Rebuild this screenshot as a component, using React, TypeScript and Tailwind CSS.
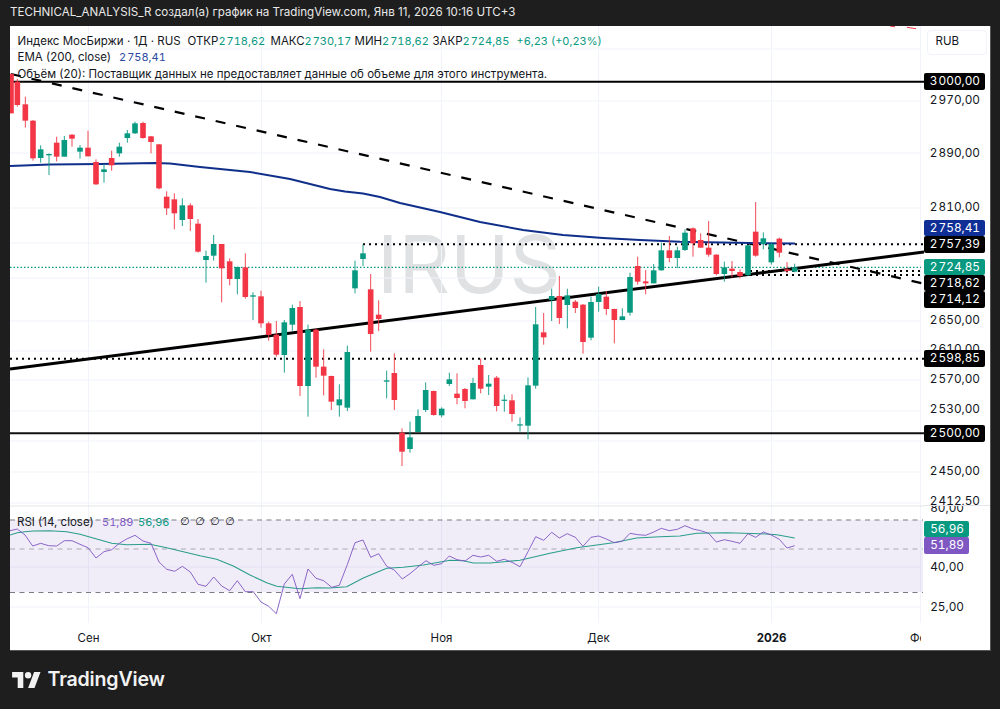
import React from "react";

const RED = "#f23645";
const GREEN = "#089981";

// [centre x, wick top, body top, body bottom, wick bottom, colour (1 = green, 0 = red)]
type C = [number, number, number, number, number, number];

const setA: C[] = [
  [33,220,222,340,340,0],[52,237,245,315,320,0],[76,290,313,362,383,0],[99,360,362,475,482,0],[122,436,448,474,488,1],
  [147,460,462,466,525,1],[170,410,428,470,484,0],[193,408,420,470,470,1],[216,403,404,416,440,0],[240,435,443,455,476,1],
  [264,392,443,469,469,0],[288,478,486,553,555,0],[312,492,508,516,548,1],[335,452,474,496,512,0],[358,428,440,460,470,1],
  [382,390,400,414,428,1],[405,365,370,400,402,1],[429,365,369,414,416,0],[453,408,409,426,460,0],[477,432,433,565,568,0],
  [500,574,590,625,645,0],[523,580,598,640,688,0],[547,595,616,660,678,1],[571,610,616,657,693,0],[594,657,671,755,758,0],
  [618,752,768,780,848,1],[641,705,732,767,782,1],[665,732,732,805,907,0],[689,775,784,837,856,0],[712,800,801,837,883,1],
  [736,760,802,891,896,0],[759,877,886,890,960,1],[783,872,889,970,983,0],[806,965,970,1005,1022,0],[829,963,1004,1064,1070,0],
  [853,960,967,1065,1118,1],[877,914,924,974,992,1],[900,903,921,1158,1188,0],[924,974,989,1158,1250,1],[948,986,989,1100,1133,0],
  [971,1048,1100,1127,1186,0],[994,1127,1128,1205,1230,0],[1018,1153,1198,1216,1250,1],
];
const setB: C[] = [
  [52,317,336,503,513,1],[75,62,91,145,160,1],[99,14,40,57,78,1],[122,102,148,282,335,0],[146,181,224,237,273,0],
  [170,392,421,425,475,1],[193,340,399,480,510,0],[216,565,578,635,678,0],[240,545,592,627,638,1],[264,508,528,576,576,1],
  [287,427,450,510,516,1],[311,452,453,525,527,0],[335,502,506,526,532,1],[358,398,418,432,438,1],[381,400,461,474,493,0],
  [405,444,447,483,505,0],[429,413,429,478,478,1],[452,356,375,446,460,0],[476,405,431,440,465,1],[500,408,413,498,514,0],
  [523,464,479,482,515,1],[546,463,481,522,545,0],[570,532,553,556,575,1],[594,412,436,557,598,1],[617,201,253,437,446,1],
  [641,219,277,292,314,0],[665,146,168,180,243,1],[688,108,168,234,252,0],[712,146,166,195,265,1],[736,180,185,204,219,0],
  [759,192,194,306,341,0],[783,170,186,293,301,1],[806,140,162,186,215,1],[829,153,170,207,225,0],[853,206,207,240,310,0],
  [877,205,229,240,241,1],[900,98,111,218,227,1],[923,50,78,125,134,0],[947,90,124,130,163,0],[971,72,91,130,130,1],[994,8,31,91,92,1],
];
const setC: C[] = [
  [28,138,181,204,217,0],[52,170,181,204,234,1],[75,118,128,180,183,1],[99,112,115,160,200,0],[122,130,150,173,173,0],
  [146,93,173,194,200,0],[169,193,194,252,256,0],[193,215,232,252,275,1],[216,213,236,243,262,0],[240,238,246,258,265,0],
  [264,165,166,255,258,1],[287,36,125,197,200,0],[310,127,145,162,178,1],[334,158,162,217,224,1],[358,143,146,188,202,0],
  [381,216,238,243,250,0],[404,221,232,245,247,1],
];

const toReal = (set: C[], ox: number, oy: number): C[] =>
  set.map(([x, a, b, c, d, g]) => [ox + x / 3, oy + a / 3, oy + b / 3, oy + c / 3, oy + d / 3, g]);
const candles: C[] = [...toReal(setA, 0, 0), ...toReal(setB, 330, 240), ...toReal(setC, 660, 190)];

const pts = (list: number[][], ox: number, oy: number) =>
  list.map(([x, y]) => `${(ox + x / 3).toFixed(1)},${(oy + y / 3).toFixed(1)}`).join(" ");

const rsi = [
  pts([[30,152],[52,147],[75,165],[98,198],[122,190],[146,197],[170,198],[193,182],[216,182],[240,193],[264,203],[288,234],[312,215],[335,209],[358,190],[382,176],[405,166],[429,183],[453,190],[477,246],[500,268],[524,274],[547,259],[571,276],[594,313],[618,319],[641,291],[665,318],[689,332],[712,302],[736,335],[760,335],[783,366],[806,379],[829,401],[853,312],[877,283],[900,356],[924,267],[948,295],[971,302],[995,322]], 0, 480),
  pts([[28,316],[52,254],[75,188],[99,180],[122,232],[146,221],[170,259],[193,270],[217,297],[240,281],[264,261],[288,242],[311,256],[335,251],[358,228],[381,239],[405,243],[429,226],[452,231],[476,226],[500,244],[523,238],[546,247],[570,260],[594,215],[617,170],[641,181],[665,157],[688,174],[712,161],[736,172],[759,199],[783,172],[806,168],[829,177],[853,188],[877,184],[900,160],[923,164],[947,166],[971,156],[994,145]], 330, 480),
  pts([[28,152],[52,148],[75,137],[99,147],[122,152],[146,160],[169,186],[193,179],[216,184],[240,190],[264,161],[287,172],[310,156],[334,165],[358,178],[381,204],[404,197]], 660, 480),
].join(" ");

const rsiMa = [
  pts([[30,165],[52,158],[75,155],[100,153],[150,152],[200,155],[240,163],[290,177],[335,190],[380,194],[450,193],[500,203],[600,227],[650,238],[700,258],[750,285],[800,308],[830,319],[900,326],[950,323]], 0, 480),
  pts([[0,324],[50,320],[100,294],[170,265],[220,262],[280,255],[360,241],[400,242],[430,249],[480,249],[570,241],[660,220],[740,203],[850,188],[920,174]], 330, 480),
  pts([[0,170],[60,168],[110,160],[200,158],[300,161],[350,164],[404,174]], 660, 480),
].join(" ");

const ema =
  "10,166 50,164.5 100,164 155,163 170,163.5 200,167 250,172 290,179 330,189 345,191.5 363,193.5 380,197 400,203 440,212 480,222 523,230 563,235 603,238 640,240 680,241.7 750,243 795,243.5";

const hGrid = [49, 101, 153, 208, 243, 278, 321, 351, 380, 411, 441, 472, 503];
const vGrid = [88.5, 261.5, 441.5, 598.5, 771.5];

const THIN = "\u200A";

type Tag = { y: number; text: string; bg?: string; color?: string; short?: boolean };
const priceTags: Tag[] = [
  { y: 100.5, text: `2${THIN}970,00` },
  { y: 153.5, text: `2${THIN}890,00` },
  { y: 207, text: `2${THIN}810,00` },
  { y: 320, text: `2${THIN}650,00` },
  { y: 349, text: `2${THIN}610,00` },
  { y: 379.5, text: `2${THIN}570,00` },
  { y: 409.5, text: `2${THIN}530,00` },
  { y: 471.5, text: `2${THIN}450,00` },
  { y: 501.5, text: `2${THIN}412,50` },
  { y: 81.5, text: `3${THIN}000,00`, bg: "#000000", color: "#ffffff" },
  { y: 228, text: `2${THIN}758,41`, bg: "#0f2f96", color: "#ffffff" },
  { y: 244.5, text: `2${THIN}757,39`, bg: "#000000", color: "#ffffff" },
  { y: 267, text: `2${THIN}724,85`, bg: GREEN, color: "#ffffff" },
  { y: 283, text: `2${THIN}718,62`, bg: "#000000", color: "#ffffff" },
  { y: 299.5, text: `2${THIN}714,12`, bg: "#000000", color: "#ffffff" },
  { y: 358.5, text: `2${THIN}598,85`, bg: "#000000", color: "#ffffff" },
  { y: 433.5, text: `2${THIN}500,00`, bg: "#000000", color: "#ffffff" },
];
const rsiTags: Tag[] = [
  { y: 508.5, text: "80,00", short: true },
  { y: 567.5, text: "40,00", short: true },
  { y: 607.5, text: "25,00", short: true },
  { y: 529, text: "56,96", bg: GREEN, color: "#ffffff", short: true },
  { y: 545.5, text: "51,89", bg: "#7e57c2", color: "#ffffff", short: true },
];

const timeLabels = [
  { x: 88.5, t: "Сен" },
  { x: 261.5, t: "Окт" },
  { x: 441.5, t: "Ноя" },
  { x: 598.5, t: "Дек" },
];

function Val({ children }: { children: React.ReactNode }) {
  return <span className="text-[#089981] tabular-nums text-[11px]">{children}</span>;
}

function AxisTag({ t, top }: { t: Tag; top: number }) {
  return (
    <div
      className={`absolute left-0 h-[16.5px] pt-[1.5px] flex items-center justify-end rounded-[2px] whitespace-nowrap leading-none pr-[5px] ${
        t.short ? "w-[45px]" : "w-[61px]"
      }`}
      style={{ top: t.y - top - 8.25, background: t.bg, color: t.color }}
    >
      {t.text}
    </div>
  );
}

export default function App() {
  return (
    <div className="w-[1000px] h-[709px] bg-[#1e1e1e] flex flex-col overflow-hidden font-['Inter',sans-serif]">
      <div className="h-[26px] pl-[10px] flex items-center text-[11.6px] text-[#e8e8e8] whitespace-nowrap">
        TECHNICAL_ANALYSIS_R создал(а) график на TradingView.com, Янв 11, 2026 10:16 UTC+3
      </div>

      <div className="ml-[10px] w-[981px] h-[625px] bg-white flex relative border-b border-r border-[#555]">
        <div className="w-[914px] flex flex-col relative">
          <div className="relative h-[598px] overflow-hidden">
            <div className="absolute left-[367px] top-[188px] text-[80px] leading-[100px] font-normal text-[#dfe1e3] whitespace-nowrap">
              IRUS
            </div>
            <svg className="absolute left-0 top-0" width="914" height="598" viewBox="10 26 914 598">
              <g stroke="#f0f3fa" strokeWidth="1">
                {hGrid.map((y) => (
                  <line key={y} x1="10" x2="921" y1={y} y2={y} />
                ))}
                <line x1="10" x2="921" y1="567" y2="567" />
                <line x1="10" x2="921" y1="607" y2="607" />
                {vGrid.map((x) => (
                  <line key={x} x1={x} x2={x} y1="26" y2="624" />
                ))}
                <line x1="920.5" x2="920.5" y1="26" y2="624" />
              </g>
              <line x1="10" x2="924" y1="506" y2="506" stroke="#e4e6ea" strokeWidth="1.2" />

              <rect x="10" y="520" width="913" height="72" fill="#7e57c2" fillOpacity="0.11" />
              <line x1="10" x2="923" y1="520" y2="520" stroke="#787b86" strokeWidth="1" strokeDasharray="5 4.5" />
              <line x1="10" x2="923" y1="549" y2="549" stroke="#787b86" strokeOpacity="0.6" strokeWidth="1" strokeDasharray="5 4.5" />
              <line x1="10" x2="923" y1="592.5" y2="592.5" stroke="#787b86" strokeWidth="1" strokeDasharray="5 4.5" />
              <polyline points={rsiMa} fill="none" stroke="#2a9d8a" strokeWidth="1.1" />
              <polyline points={rsi} fill="none" stroke="#7e57c2" strokeOpacity="0.9" strokeWidth="1" />

              <line x1="10" x2="924" y1="81.7" y2="81.7" stroke="#000" strokeWidth="2" />
              <line x1="10" x2="924" y1="433.3" y2="433.3" stroke="#111" strokeWidth="2" />
              <line x1="10" x2="924" y1="358.7" y2="358.7" stroke="#000" strokeWidth="2" strokeDasharray="2 4" />
              <line x1="363" x2="924" y1="244.3" y2="244.3" stroke="#000" strokeWidth="2" strokeDasharray="2 4" />
              <line x1="750" x2="924" y1="271" y2="271" stroke="#000" strokeWidth="2" strokeDasharray="2 4" />
              <line x1="750" x2="924" y1="275" y2="275" stroke="#000" strokeWidth="2" strokeDasharray="2 4" />
              <line x1="10" x2="921" y1="267.3" y2="267.3" stroke={GREEN} strokeWidth="1.2" strokeDasharray="1.5 2" />
              <line x1="11" x2="924" y1="74" y2="283.7" stroke="#000" strokeWidth="2.2" strokeDasharray="10 11" />
              <line x1="10" x2="924" y1="369" y2="252" stroke="#000" strokeWidth="3" />
              <line x1="890" x2="895" y1="26" y2="26.8" stroke={RED} strokeWidth="1" />
              <line x1="907" x2="916" y1="27.3" y2="28.7" stroke={RED} strokeWidth="1" />

              <polyline points={ema} fill="none" stroke="#0f2f8a" strokeWidth="2" />

              {candles.map(([x, wt, bt, bb, wb, g], i) => {
                const c = g ? GREEN : RED;
                const h = Math.max(bb - bt, 1.2);
                return (
                  <g key={i}>
                    <line x1={x} x2={x} y1={wt} y2={wb} stroke={c} strokeWidth="0.9" />
                    <rect x={x - 2.8} y={bt} width="5.6" height={h} fill={c} />
                  </g>
                );
              })}
            </svg>

            <div className="absolute left-[7.5px] top-[6.5px] text-[11.5px] leading-[16.5px] text-[#131722] whitespace-nowrap">
              <div className="flex">
                <span className="w-[170px]">Индекс МосБиржи · 1Д · RUS</span>
                <span className="w-[83px]">
                  ОТКР<Val>{`2${THIN}718,62`}</Val>
                </span>
                <span className="w-[84px]">
                  МАКС<Val>{`2${THIN}730,17`}</Val>
                </span>
                <span className="w-[78px]">
                  МИН<Val>{`2${THIN}718,62`}</Val>
                </span>
                <span className="w-[84px]">
                  ЗАКР<Val>{`2${THIN}724,85`}</Val>
                </span>
                <Val>+6,23 (+0,23%)</Val>
              </div>
              <div className="flex gap-[8px]">
                <span>EMA (200, close)</span>
                <span className="text-[#2a4a9f] tabular-nums text-[11px]">{`2${THIN}758,41`}</span>
              </div>
              <div>Объём (20): Поставщик данных не предоставляет данные об объеме для этого инструмента.</div>
            </div>

            <div className="absolute left-[7px] top-[488px] flex items-center text-[11.5px] leading-[16px] whitespace-nowrap">
              <span className="text-[#131722] w-[85px]">RSI (14, close)</span>
              <span className="text-[#7e57c2] w-[36px] tabular-nums text-[11px]">51,89</span>
              <span className="text-[#089981] w-[42px] tabular-nums text-[11px]">56,96</span>
              <span className="flex text-[#131722] text-[11px] font-['DejaVu_Sans',sans-serif]">
                <span className="w-[15px]">∅</span>
                <span className="w-[15px]">∅</span>
                <span className="w-[15px]">∅</span>
                <span className="w-[15px]">∅</span>
              </span>
            </div>
          </div>

          <div className="relative h-[27px] overflow-hidden text-[11.5px] text-[#131722]">
            {timeLabels.map((l) => (
              <span
                key={l.t}
                className="absolute top-[7px] -translate-x-1/2 leading-[16px]"
                style={{ left: l.x - 10 }}
              >
                {l.t}
              </span>
            ))}
            <span className="absolute left-[761.5px] top-[7px] -translate-x-1/2 leading-[16px] font-bold">
              2026
            </span>
            <span className="absolute left-[900px] top-[7px] leading-[16px] w-[11px] overflow-hidden">Фев</span>
          </div>
        </div>

        <div className="flex-1 flex flex-col text-[11.8px] tabular-nums text-[#131722]">
          <div className="relative h-[480px] overflow-hidden border-b border-[#e4e6ea]">
            <div className="absolute left-[2.5px] top-[3.5px] w-[60px] h-[25px] border border-[#f0f3fa] rounded-[4px] pl-[8px] flex items-center text-[11.5px]">
              RUB
            </div>
            {priceTags.map((t) => (
              <AxisTag key={t.text} t={t} top={26} />
            ))}
          </div>
          <div className="relative flex-1 overflow-hidden">
            {rsiTags.map((t) => (
              <AxisTag key={t.text} t={t} top={506} />
            ))}
          </div>
        </div>
      </div>

      <div className="flex-1 flex items-center pl-[11.5px] pb-[1px] gap-[7px]">
        <svg width="29" height="16" viewBox="0 0 36 20" fill="#f2f2f2">
          <path d="M14 20H7V7H0V0h14v20zM28 20h-8L27.5 0h8L28 20z" />
          <circle cx="20" cy="4" r="4" />
        </svg>
        <span className="text-[19.6px] font-semibold text-[#f2f2f2] tracking-[-0.01em] leading-none">TradingView</span>
      </div>
    </div>
  );
}
